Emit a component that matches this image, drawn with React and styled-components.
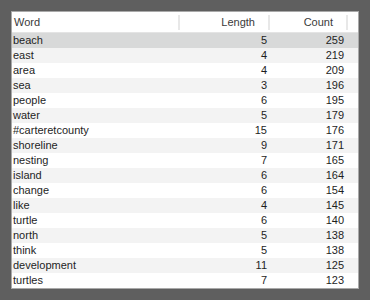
import styled, { createGlobalStyle } from 'styled-components';

const rows = [
  ['beach', 5, 259],
  ['east', 4, 219],
  ['area', 4, 209],
  ['sea', 3, 196],
  ['people', 6, 195],
  ['water', 5, 179],
  ['#carteretcounty', 15, 176],
  ['shoreline', 9, 171],
  ['nesting', 7, 165],
  ['island', 6, 164],
  ['change', 6, 154],
  ['like', 4, 145],
  ['turtle', 6, 140],
  ['north', 5, 138],
  ['think', 5, 138],
  ['development', 11, 125],
  ['turtles', 7, 123],
];

const GlobalStyle = createGlobalStyle`
  html, body {
    margin: 0;
    background: #5f5f5f;
  }
  body {
    font-family: "Liberation Sans", Arial, sans-serif;
  }
`;

const App = () => (
  <>
    <GlobalStyle />
    <Page>
      <Table>
        <HeaderRow>
          <HeaderCell>Word</HeaderCell>
          <HeaderCell $right>Length</HeaderCell>
          <HeaderCell $right>Count</HeaderCell>
          <span />
        </HeaderRow>
        {rows.map(([word, len, count], i) => (
          <Row key={word} $selected={i === 0} $striped={i % 2 === 1}>
            <Cell>{word}</Cell>
            <Cell $right $pad={3}>{len}</Cell>
            <Cell $right $pad={4}>{count}</Cell>
            <span />
          </Row>
        ))}
      </Table>
    </Page>
  </>
);

export default App;

const Page = styled.div`
  padding: 11px 0 0 11px;
  height: 300px;
  box-sizing: border-box;
`;

const Table = styled.div`
  width: 348px;
  border: 1px solid #a9a9a9;
  background: #ffffff;
  box-sizing: border-box;
`;

const HeaderRow = styled.div`
  display: grid;
  grid-template-columns: 168px 90px 78px 1fr;
  align-items: center;
  height: 21px;
  background: #ffffff;
  border-bottom: 1px solid #e4e4e4;
  box-sizing: border-box;
`;

const HeaderCell = styled.div`
  height: 15px;
  line-height: 15px;
  font-size: 11px;
  color: #3a3a3a;
  padding: ${(p) => (p.$right ? '0 13px 0 0' : '0 0 0 2px')};
  text-align: ${(p) => (p.$right ? 'right' : 'left')};
  border-right: 2px solid #e8e8e8;
`;

const Row = styled.div`
  display: grid;
  grid-template-columns: 168px 90px 78px 1fr;
  height: 15px;
  align-items: center;
  background: ${(p) => (p.$selected ? '#d8d9d9' : p.$striped ? '#f3f3f3' : '#ffffff')};
`;

const Cell = styled.div`
  font-size: 11px;
  line-height: 15px;
  color: #1e1e1e;
  text-align: ${(p) => (p.$right ? 'right' : 'left')};
  padding: ${(p) => (p.$right ? `0 ${p.$pad}px 0 0` : '0 0 0 1px')};
  white-space: nowrap;
`;
